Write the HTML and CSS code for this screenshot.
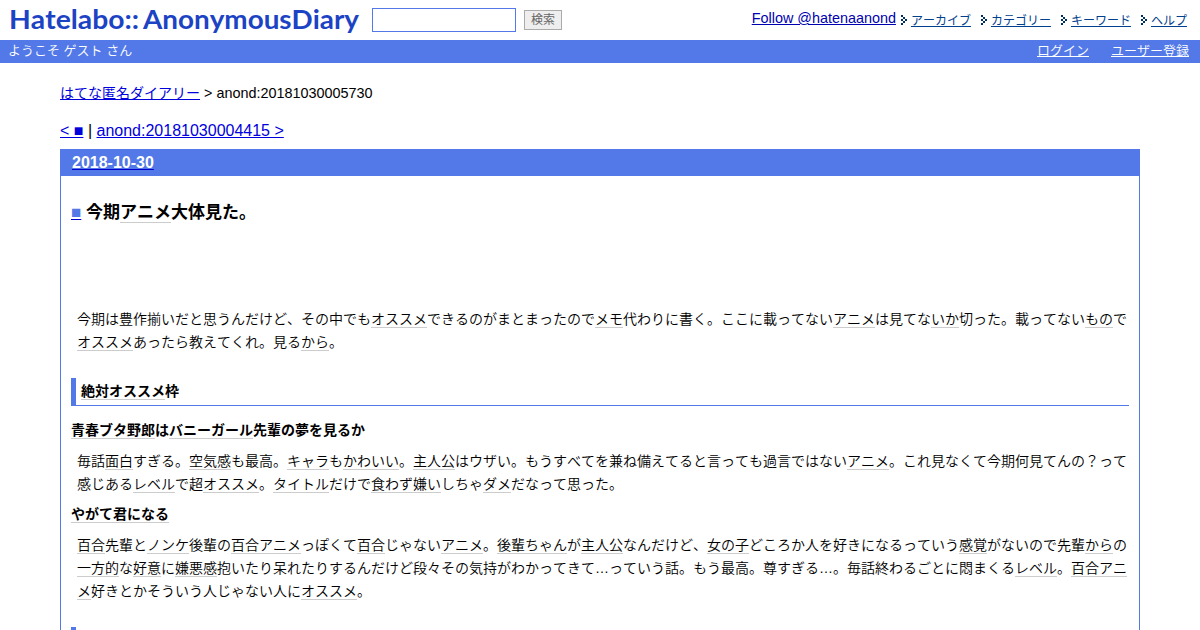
FILE: index.html
```
<!DOCTYPE html>
<html lang="ja">
<head>
    <meta charset="UTF-8">
    <title>今期アニメ大体見た。</title>
    <link rel="stylesheet" href="styles.css">
</head>
<body>
    <svg class="sprite" width="0" height="0">
        <symbol id="arrow" viewBox="0 0 6 10">
            <path d="M0 0h2v2h-2zM2 2h2v2h-2zM4 4h2v2h-2zM2 6h2v2h-2zM0 8h2v2h-2zM0 4h2v2h-2z"/>
        </symbol>
    </svg>

    <!-- ヘッダー -->
    <header class="header">
        <a href="#" class="logo">
            <svg width="352" height="36" viewBox="0 0 352 36">
                <text x="0" y="29" textLength="130" lengthAdjust="spacingAndGlyphs">Hatelabo::</text>
                <text x="134" y="29" textLength="216" lengthAdjust="spacingAndGlyphs">AnonymousDiary</text>
            </svg>
        </a>
        <form class="search">
            <input type="text" class="search-word">
            <button type="button" class="search-button">検索</button>
        </form>
        <nav class="menu">
            <a href="#" class="follow">Follow @hatenaanond</a>
            <span class="menu-item"><svg class="arrow"><use href="#arrow"/></svg><a href="#">アーカイブ</a></span>
            <span class="menu-item"><svg class="arrow"><use href="#arrow"/></svg><a href="#">カテゴリー</a></span>
            <span class="menu-item"><svg class="arrow"><use href="#arrow"/></svg><a href="#">キーワード</a></span>
            <span class="menu-item"><svg class="arrow"><use href="#arrow"/></svg><a href="#">ヘルプ</a></span>
        </nav>
    </header>
    <div class="welcome">
        <span>ようこそ ゲスト さん</span>
        <div class="welcome-links">
            <a href="#">ログイン</a>
            <a href="#">ユーザー登録</a>
        </div>
    </div>

    <!-- 本文 -->
    <main class="container">
        <p class="breadcrumb"><a href="#">はてな匿名ダイアリー</a> &gt; anond:20181030005730</p>
        <p class="pager"><a href="#">&lt; ■</a> | <a href="#">anond:20181030004415 &gt;</a></p>

        <article class="day">
            <h2 class="date"><a href="#">2018-10-30</a></h2>
            <div class="section">
                <h3 class="title"><a href="#" class="mark">■</a> 今期<a class="keyword">アニメ</a>大体見た。</h3>

                <p>今期は豊作揃いだと思うんだけど、その中でも<a class="keyword">オススメ</a>できるのがまとまったので<a class="keyword">メモ</a>代わりに書く。ここに載ってない<a class="keyword">アニメ</a>は見てな<a class="keyword">いか</a>切った。載ってない<a class="keyword">もの</a>で<a class="keyword">オススメ</a>あったら教えてくれ。見る<a class="keyword">から</a>。</p>

                <h4><a class="keyword">絶対</a><a class="keyword">オススメ</a>枠</h4>

                <h5><a class="keyword">青春ブタ野郎</a>は<a class="keyword">バニーガール</a>先輩の夢を見るか</h5>
                <p>毎話<a class="keyword">面白</a>すぎる。<a class="keyword">空気感</a>も最高。<a class="keyword">キャラ</a>も<a class="keyword">かわいい</a>。<a class="keyword">主人公</a>はウザい。もうすべてを兼ね備えてると言っても過言ではない<a class="keyword">アニメ</a>。これ見なくて今期何見てんの？って感じある<a class="keyword">レベル</a>で超<a class="keyword">オススメ</a>。<a class="keyword">タイトル</a>だけで<a class="keyword">食わず嫌い</a>しちゃ<a class="keyword">ダメ</a>だなって思った。</p>

                <h5><a class="keyword">やがて君になる</a></h5>
                <p><a class="keyword">百合</a>先輩と<a class="keyword">ノンケ</a>後輩の<a class="keyword">百合アニメ</a>っぽくて<a class="keyword">百合</a>じゃない<a class="keyword">アニメ</a>。<a class="keyword">後輩ちゃん</a>が<a class="keyword">主人公</a>なんだけど、<a class="keyword">女の子</a>どころか人を好きになるっていう<a class="keyword">感覚</a>がないので先輩<a class="keyword">から</a>の<a class="keyword">一方的</a>な<a class="keyword">好意</a>に<a class="keyword">嫌悪感</a>抱いたり呆れたりするんだけど段々その気持がわかってきて…っていう話。もう最高。尊すぎる…。毎話終わるごとに悶まくる<a class="keyword">レベル</a>。<a class="keyword">百合アニメ</a>好きとかそういう人じゃない人に<a class="keyword">オススメ</a>。</p>

                <h4></h4>
            </div>
        </article>
    </main>
</body>
</html>
```

FILE: styles.css
```
/* 基本 */
body {
    margin: 0;
    height: 630px;
    overflow: hidden;
    background: #fff;
    color: #000;
    font-family: "Liberation Sans", "Noto Sans CJK JP", sans-serif;
    font-size: 14px;
    font-kerning: none;
}

a {
    color: #0000dd;
}

.sprite {
    position: absolute;
}

/* ヘッダー */
.header {
    display: flex;
    height: 40px;
}

.logo {
    margin-left: 9px;
    width: 363px;
}

.logo svg {
    display: block;
}

.logo text {
    font-family: Lato, sans-serif;
    font-size: 27px;
    font-weight: 700;
    fill: #1c43c4;
}

.search {
    display: flex;
    align-items: flex-start;
    gap: 8px;
    padding-top: 8px;
}

.search-word {
    box-sizing: border-box;
    width: 144px;
    height: 24px;
    border: 1px solid #5279e7;
    background: #fff;
}

.search-button {
    box-sizing: border-box;
    width: 38px;
    height: 20px;
    margin: 2px 0 0;
    padding: 0;
    border: 1px solid #aaa;
    background: #eee;
    color: #666;
    font-family: inherit;
    font-size: 12px;
    line-height: 17px;
}

.menu {
    display: flex;
    margin-left: auto;
    padding-right: 13px;
    font-size: 12px;
    line-height: 18px;
}

.menu .follow {
    margin: 9px 5px 0 0;
    color: #0000b0;
    font-size: 14.4px;
}

.menu-item {
    margin: 12px 0 0 10px;
}

.follow + .menu-item {
    margin-left: 0;
}

.menu-item a {
    color: #00408c;
}

.arrow {
    width: 6px;
    height: 10px;
    margin-right: 4px;
    vertical-align: 0;
    fill: #003060;
}

.welcome {
    display: flex;
    justify-content: space-between;
    height: 23px;
    padding: 0 11px 0 8px;
    background: #5279e7;
    color: #fff;
    font-size: 13px;
    font-weight: 350;
    line-height: 22px;
}

.welcome-links {
    display: flex;
    gap: 22px;
}

.welcome a {
    color: #fff;
}

/* 本文 */
.container {
    margin: 0 60px;
}

.breadcrumb {
    margin: 0;
    padding-top: 19px;
    font-size: 14.4px;
    line-height: 23px;
}

.breadcrumb a {
    font-size: 14px;
}

.pager {
    margin: 13px 0 5px;
    font-size: 16px;
    line-height: 26px;
}

.day {
    border: 1px solid #5279e7;
}

.date {
    margin: 0;
    padding-left: 11px;
    background: #5279e7;
    font-size: 16px;
    line-height: 26px;
}

.date a {
    color: #fff;
    text-decoration-color: #0000cc;
}

.section {
    padding: 23px 10px;
}

.title {
    margin: 0 0 81px;
    font-size: 17px;
    line-height: 28px;
}

.mark {
    color: #5279e7;
    text-decoration-color: #0000cc;
}

.section p {
    margin: 0 0 0 6px;
    font-weight: 350;
    line-height: 23px;
}

.section h4 {
    box-sizing: border-box;
    height: 28px;
    margin: 24px 0 13px;
    padding-left: 5px;
    border-left: 5px solid #5279e7;
    border-bottom: 1px solid #5279e7;
    font-size: 14px;
    line-height: 27px;
}

.section h5 {
    margin: 7px 0 8px;
    font-size: 14px;
    line-height: 23px;
}

.keyword {
    border-bottom: 1px solid #ccc;
    color: #000;
}
```
